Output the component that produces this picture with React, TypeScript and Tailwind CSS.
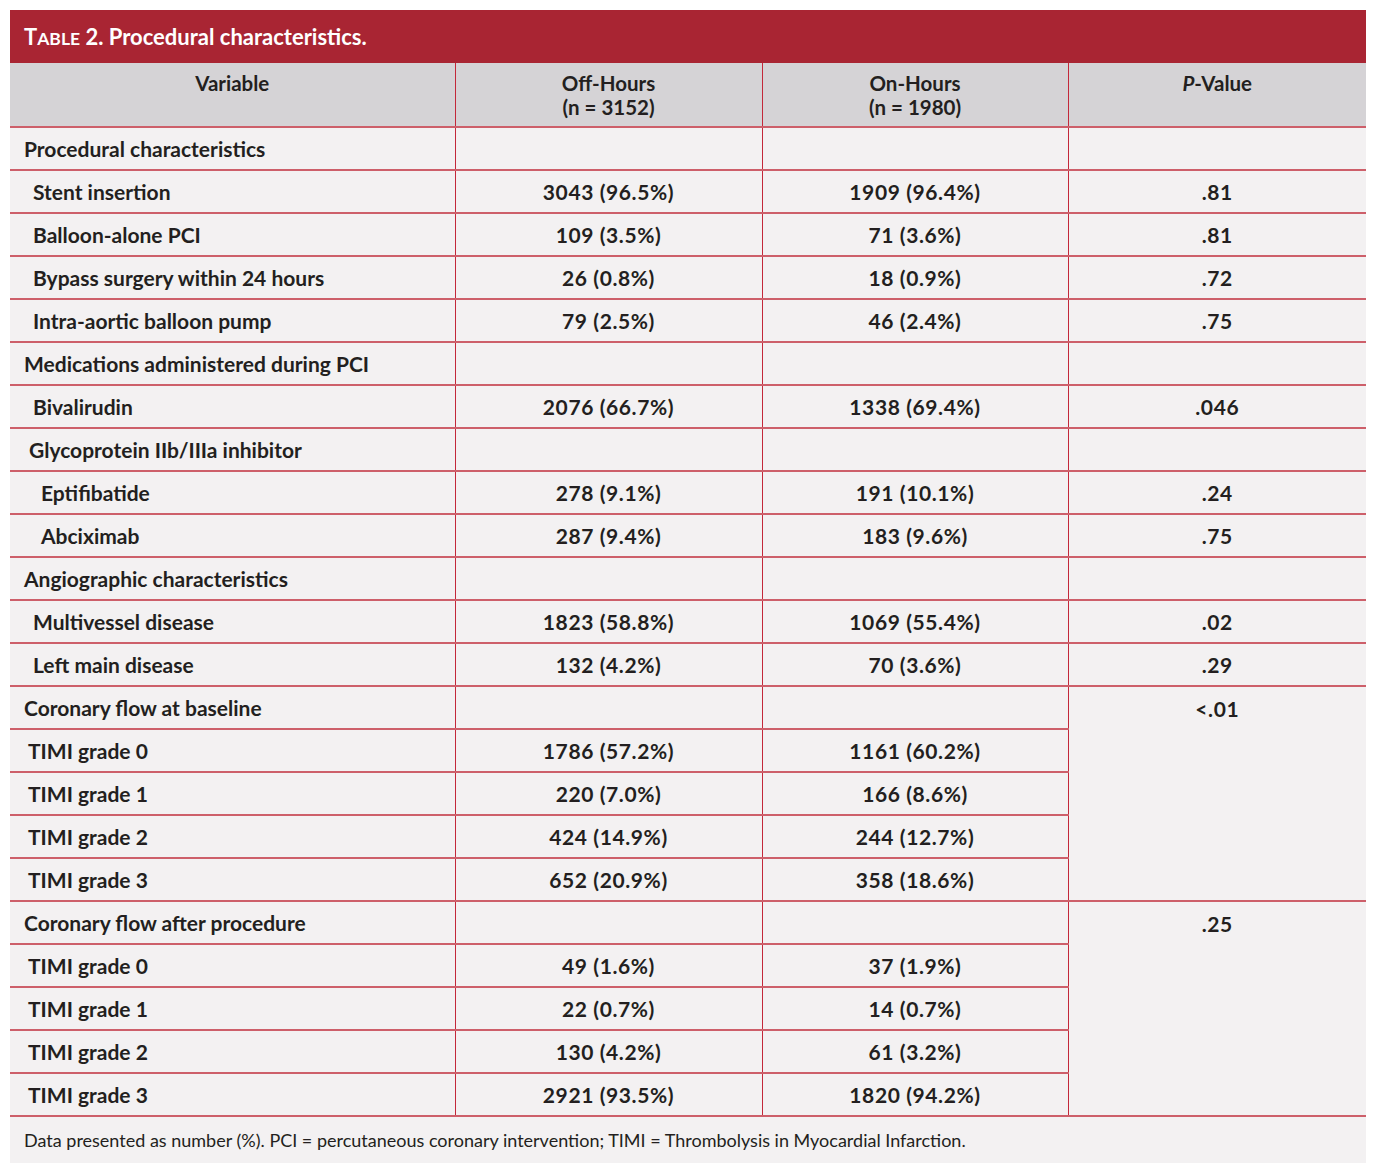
import React from "react";

type Row = {
  label: string;
  indent: string;
  off?: string;
  on?: string;
  p?: string;
  pSpan?: number;
  noP?: boolean;
};

const rows: Row[] = [
  { label: "Procedural characteristics", indent: "pl-[14px]", p: "" },
  { label: "Stent insertion", indent: "pl-[23px]", off: "3043 (96.5%)", on: "1909 (96.4%)", p: ".81" },
  { label: "Balloon-alone PCI", indent: "pl-[23px]", off: "109 (3.5%)", on: "71 (3.6%)", p: ".81" },
  { label: "Bypass surgery within 24 hours", indent: "pl-[23px]", off: "26 (0.8%)", on: "18 (0.9%)", p: ".72" },
  { label: "Intra-aortic balloon pump", indent: "pl-[23px]", off: "79 (2.5%)", on: "46 (2.4%)", p: ".75" },
  { label: "Medications administered during PCI", indent: "pl-[14px]", p: "" },
  { label: "Bivalirudin", indent: "pl-[23px]", off: "2076 (66.7%)", on: "1338 (69.4%)", p: ".046" },
  { label: "Glycoprotein IIb/IIIa inhibitor", indent: "pl-[19px]", p: "" },
  { label: "Eptifibatide", indent: "pl-[31px]", off: "278 (9.1%)", on: "191 (10.1%)", p: ".24" },
  { label: "Abciximab", indent: "pl-[31px]", off: "287 (9.4%)", on: "183 (9.6%)", p: ".75" },
  { label: "Angiographic characteristics", indent: "pl-[14px]", p: "" },
  { label: "Multivessel disease", indent: "pl-[23px]", off: "1823 (58.8%)", on: "1069 (55.4%)", p: ".02" },
  { label: "Left main disease", indent: "pl-[23px]", off: "132 (4.2%)", on: "70 (3.6%)", p: ".29" },
  { label: "Coronary flow at baseline", indent: "pl-[14px]", p: "<.01", pSpan: 5 },
  { label: "TIMI grade 0", indent: "pl-[18px]", off: "1786 (57.2%)", on: "1161 (60.2%)", noP: true },
  { label: "TIMI grade 1", indent: "pl-[18px]", off: "220 (7.0%)", on: "166 (8.6%)", noP: true },
  { label: "TIMI grade 2", indent: "pl-[18px]", off: "424 (14.9%)", on: "244 (12.7%)", noP: true },
  { label: "TIMI grade 3", indent: "pl-[18px]", off: "652 (20.9%)", on: "358 (18.6%)", noP: true },
  { label: "Coronary flow after procedure", indent: "pl-[14px]", p: ".25", pSpan: 5 },
  { label: "TIMI grade 0", indent: "pl-[18px]", off: "49 (1.6%)", on: "37 (1.9%)", noP: true },
  { label: "TIMI grade 1", indent: "pl-[18px]", off: "22 (0.7%)", on: "14 (0.7%)", noP: true },
  { label: "TIMI grade 2", indent: "pl-[18px]", off: "130 (4.2%)", on: "61 (3.2%)", noP: true },
  { label: "TIMI grade 3", indent: "pl-[18px]", off: "2921 (93.5%)", on: "1820 (94.2%)", noP: true },
];

const hb = "border-b-2 border-b-[#cd5f6a]";
const vb = "border-r border-r-[#c3283a]";
const th = "align-top pt-[8px] text-center font-bold text-[20.5px] leading-[24px]";
const num = "pt-[1px] font-bold text-[21px] text-center tracking-[0.6px]";

export default function App() {
  return (
    <div className="min-h-[1176px] bg-white pt-[10px] pl-[10px] text-[#231f20] [font-family:Lato,'Noto_Sans',sans-serif]">
      <div className="w-[1356px] bg-[#f3f1f2]">
        <div className="h-[53px] bg-[#a92533] pl-[14px] flex items-center text-white font-bold text-[22px]">
          <span>
            T<span className="text-[17.5px]">ABLE</span> 2. Procedural characteristics.
          </span>
        </div>
        <table className="w-[1356px] table-fixed border-collapse">
          <colgroup>
            <col className="w-[445px]" />
            <col className="w-[307px]" />
            <col className="w-[306px]" />
            <col className="w-[298px]" />
          </colgroup>
          <thead>
            <tr className="bg-[#d5d3d6] h-[64px]">
              <th className={`${vb} ${hb} ${th}`}>Variable</th>
              <th className={`${vb} ${hb} ${th}`}>
                Off-Hours
                <br />
                (n = 3152)
              </th>
              <th className={`${vb} ${hb} ${th}`}>
                On-Hours
                <br />
                (n = 1980)
              </th>
              <th className={`${hb} ${th}`}>
                <i>P</i>-Value
              </th>
            </tr>
          </thead>
          <tbody>
            {rows.map((r, i) => (
              <tr key={i} className="h-[43px]">
                <td className={`${vb} ${hb} ${r.indent} pt-[1px] font-bold text-[21px] text-left`}>{r.label}</td>
                <td className={`${vb} ${hb} ${num}`}>{r.off ?? ""}</td>
                <td className={`${vb} ${hb} ${num}`}>{r.on ?? ""}</td>
                {r.noP ? null : (
                  <td
                    rowSpan={r.pSpan ?? 1}
                    className={`${hb} font-bold text-[21px] text-center tracking-[0.6px] ${
                      r.pSpan ? "align-top pt-[6px]" : "pt-[1px]"
                    }`}
                  >
                    {r.p}
                  </td>
                )}
              </tr>
            ))}
          </tbody>
        </table>
        <div className="h-[46px] pl-[14px] flex items-center text-[18px]">
          Data presented as number (%). PCI = percutaneous coronary intervention; TIMI = Thrombolysis in Myocardial Infarction.
        </div>
      </div>
    </div>
  );
}
